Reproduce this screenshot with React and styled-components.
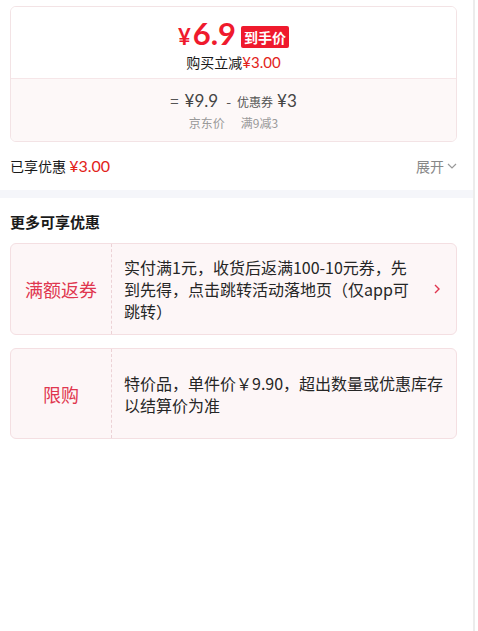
import React from 'react'
import styled, { createGlobalStyle } from 'styled-components'

const GlobalStyle = createGlobalStyle`
  html, body {
    margin: 0;
    padding: 0;
    background: #fff;
    font-family: "Noto Sans CJK SC", "Noto Sans", sans-serif;
    color: #1a1a1a;
  }
`

const coupons = [
  {
    tag: '满额返券',
    text: '实付满1元，收货后返满100-10元券，先到先得，点击跳转活动落地页（仅app可跳转）',
    arrow: true,
  },
  {
    tag: '限购',
    text: '特价品，单件价￥9.90，超出数量或优惠库存以结算价为准',
    arrow: false,
  },
]

function App() {
  return (
    <Page>
      <GlobalStyle />
      <Top>
        <PriceCard>
          <PriceTop>
            <PriceLine>
              <BigPrice><small>¥</small>6.9</BigPrice>
              <Badge>到手价</Badge>
            </PriceLine>
            <Reduce>购买立减<em>¥3.00</em></Reduce>
          </PriceTop>
          <PriceBottom>
            <Formula>
              <span>=</span>
              <Amount>¥9.9</Amount>
              <Minus>-</Minus>
              <Small>优惠券</Small>
              <Amount>¥3</Amount>
            </Formula>
            <Labels>
              <span>京东价</span>
              <span>满9减3</span>
            </Labels>
          </PriceBottom>
        </PriceCard>
        <SavedRow>
          <Saved>已享优惠 <em>¥3.00</em></Saved>
          <Expand>
            展开
            <svg width="10" height="10" viewBox="0 0 10 10" fill="none">
              <path d="M1 3l4 4 4-4" stroke="#999" strokeWidth="1.2" />
            </svg>
          </Expand>
        </SavedRow>
      </Top>
      <Band />
      <More>
        <SectionTitle>更多可享优惠</SectionTitle>
        {coupons.map((c) => (
          <Coupon key={c.tag}>
            <Tag>{c.tag}</Tag>
            <Desc $arrow={c.arrow}>{c.text}</Desc>
            {c.arrow && (
              <ArrowCell>
                <svg width="8" height="12" viewBox="0 0 8 12" fill="none">
                  <path d="M2 2l4 4-4 4" stroke="#e0364f" strokeWidth="1.4" />
                </svg>
              </ArrowCell>
            )}
          </Coupon>
        ))}
      </More>
    </Page>
  )
}

export default App

const Page = styled.div`
  width: 475px;
  min-height: 631px;
  border-right: 2px solid #ececec;
  box-sizing: border-box;
`

const Top = styled.div`
  padding: 6px 16px 0 10px;
`

const PriceCard = styled.div`
  border: 1px solid #f3e3e5;
  border-radius: 6px;
  overflow: hidden;
`

const PriceTop = styled.div`
  display: flex;
  flex-direction: column;
  align-items: center;
  padding: 12px 0 6px;
  border-bottom: 1px solid #f6e6e8;
  background: #fff;
`

const PriceLine = styled.div`
  display: flex;
  align-items: center;
  gap: 5px;
  height: 32px;
`

const BigPrice = styled.span`
  color: #ef1a2d;
  font-family: "Lato", "Noto Sans", sans-serif;
  font-weight: 700;
  font-size: 31px;
  line-height: 32px;
  small {
    font-size: 22px;
    margin-right: 2px;
  }
`

const Badge = styled.span`
  background: #ef1a2d;
  color: #fff;
  font-size: 14px;
  font-weight: 700;
  line-height: 22px;
  padding: 0 3px;
  border-radius: 2px;
  margin-top: 4px;
`

const Reduce = styled.div`
  font-size: 14px;
  line-height: 20px;
  color: #1a1a1a;
  margin-top: 1px;
  em {
    font-style: normal;
    color: #e2231a;
    font-family: "Lato", "Noto Sans", sans-serif;
    font-size: 15px;
  }
`

const PriceBottom = styled.div`
  background: #fdf8f8;
  display: flex;
  flex-direction: column;
  align-items: center;
  padding: 11px 0 9px;
`

const Formula = styled.div`
  display: flex;
  align-items: baseline;
  gap: 6px;
  color: #555;
  font-size: 15px;
  line-height: 22px;
`

const Amount = styled.span`
  font-family: "Lato", "Noto Sans", sans-serif;
  font-size: 17px;
  color: #444;
`

const Minus = styled.span`
  font-size: 14px;
  margin-left: 2px;
`

const Small = styled.span`
  font-size: 12px;
  margin-right: -2px;
`

const Labels = styled.div`
  display: flex;
  gap: 16px;
  font-size: 12px;
  line-height: 18px;
  color: #999;
  margin-top: 1px;
`

const SavedRow = styled.div`
  display: flex;
  justify-content: space-between;
  align-items: center;
  height: 48px;
`

const Saved = styled.span`
  font-size: 14px;
  color: #1a1a1a;
  em {
    font-style: normal;
    color: #e2231a;
    font-size: 16px;
    font-family: "Lato", "Noto Sans", sans-serif;
  }
`

const Expand = styled.span`
  display: flex;
  align-items: center;
  gap: 3px;
  font-size: 14px;
  color: #888;
`

const Band = styled.div`
  height: 8px;
  background: #f5f6fa;
`

const More = styled.div`
  padding: 14px 16px 0 10px;
  display: flex;
  flex-direction: column;
  gap: 13px;
`

const SectionTitle = styled.div`
  font-size: 15px;
  font-weight: 700;
  line-height: 20px;
  color: #1a1a1a;
  margin-bottom: -2px;
`

const Coupon = styled.div`
  display: flex;
  align-items: stretch;
  box-sizing: border-box;
  min-height: 91px;
  background: #fdf6f7;
  border: 1px solid #f4dfe2;
  border-radius: 6px;
`

const Tag = styled.div`
  width: 100px;
  flex-shrink: 0;
  display: flex;
  align-items: center;
  justify-content: center;
  color: #e0364f;
  font-size: 18px;
  border-right: 1px dashed #ecd2d6;
`

const Desc = styled.div`
  flex: 1;
  padding: 12px ${(p) => (p.$arrow ? '0' : '12px')} 12px 12px;
  font-size: 16px;
  line-height: 22px;
  color: #262626;
  display: flex;
  align-items: center;
`

const ArrowCell = styled.div`
  width: 38px;
  flex-shrink: 0;
  display: flex;
  align-items: center;
  justify-content: center;
`
